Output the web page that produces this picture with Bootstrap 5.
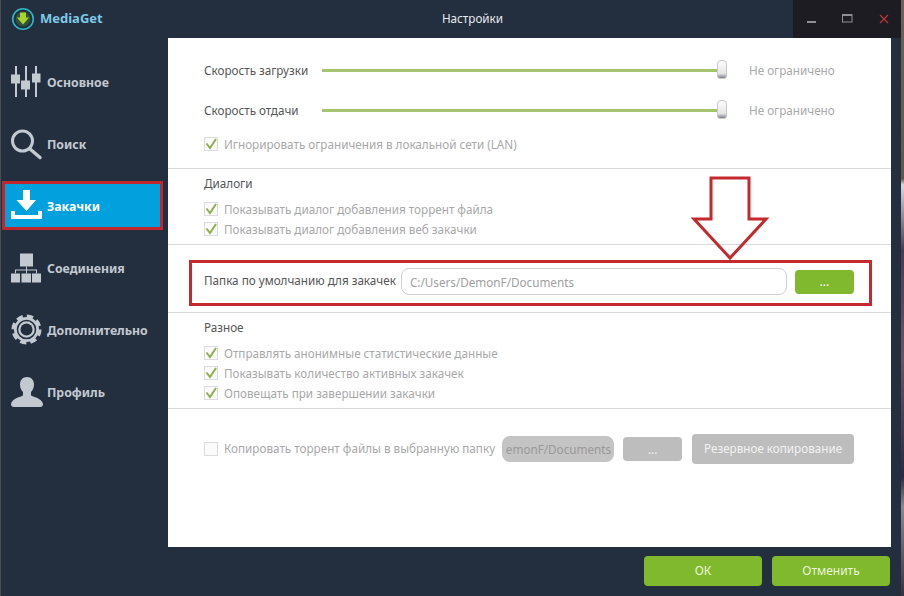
<!DOCTYPE html>
<html lang="ru"><head><meta charset="utf-8"><title>Настройки</title>
<link href="https://cdn.jsdelivr.net/npm/bootstrap@5.3.0/dist/css/bootstrap.min.css" rel="stylesheet">
<style>
html,body{height:100%;margin:0;overflow:hidden}
body{width:904px;height:596px;position:relative;font-family:"Noto Sans","Liberation Sans",sans-serif;font-size:11.7px;color:#555;background:linear-gradient(#6d6255 0,#5d5a4a 30%,#d8d8d8 31%,#4a3a55 42%,#6d5266 60%,#2a2a45 80%,#8a8a8a 85%,#3a3040 100%)}
.shell{width:901px;height:596px;border-left:1px solid #4a4f57;padding-left:1px;background:#232f3f}
.topbar{height:38px}
.brand{width:166px;padding-left:9px;color:#7fc9e6;font-weight:700;font-size:13px;gap:5px}
.wintitle{width:625px;padding-right:16px;color:#e8ebee;text-align:center}
.winctl{width:108px;background:#1c1c22;padding-left:14px;gap:26px;align-items:center}
.midrow{height:509px}
.side{width:166px;padding-top:19px;gap:13px}
.sideitem{height:49px;border:3px solid transparent;color:#c3c9d1;font-weight:700;font-size:12.3px;padding-left:6px;gap:4px;text-decoration:none;margin-right:5px;white-space:nowrap}
.sideitem svg{width:32px;height:32px;flex:none}
.sideitem span{padding-top:4px}
.sideitem.on{background:#02a0dc;border-color:#c0272d;color:#fff}
.panel{width:723px;background:#fff}
.sect{border-bottom:1px solid #d9d9d9;padding-left:36px;padding-right:37px}
.s1{height:131px;padding-top:22px}
.s2{height:76px;padding-top:4px}
.s3{height:68px;padding-top:23px}
.s4{height:96px;padding-top:4px}
.s5{padding-top:25px;border-bottom:0}
.rowline{height:20px;line-height:20px;white-space:nowrap}
.gap20{margin-top:20px}
.gap14{margin-top:14px}
.head6{margin-bottom:6px}
.lift{margin-bottom:2px}
.speed{width:118px}
.track{width:400px;height:3px;background:#a6c46d;position:relative}
.knob{position:absolute;right:-5px;top:-9px;width:10px;height:19px;border-radius:4px 4px 3px 3px;background:linear-gradient(#fff,#e4e4e4 75%,#77808a);border:1px solid #c8c8c8}
.val{margin-left:27px;color:#a8a8a8}
.muted{color:#a8a8a8}
.tick{width:14px;height:14px;border:1px solid #dcdcdc;background:#fbfbfb;margin-right:6px;flex:none}
.tick svg{display:block;width:14px;height:14px;margin:-1px}
.fold{height:27px;width:386px;border:1px solid #cfcfcf;border-radius:8px;font-size:11.7px;color:#a0a0a0;padding:0 8px;background:#fff;margin-left:5px;box-shadow:none;flex:none}
.gbtn{background:#80b82e;border:0;color:#fff;border-radius:4px;font-size:12px;padding:0}
.gray,.gray:disabled{background:#bdbdbd;color:#f2f2f2;opacity:1;border:0;padding:0;font-size:11.7px;border-radius:4px;white-space:nowrap}
.dots{width:59px;height:24px;margin-left:8px;line-height:20px;flex:none}
.dots.gray{margin-left:9px}
.slim,.slim:disabled{height:26px;width:112px;flex:none;border:0;border-radius:8px;background:#c4c4c4;color:#999;font-size:11.7px;margin-left:7px;overflow:hidden;text-align:right;padding:0 3px 0 0}
.backup{width:162px;height:30px;margin-left:10px;flex:none}
.foot{height:49px;gap:10px;padding-right:11px;padding-top:9px}
.fbtn{width:118px;height:30px;background:#80b82e;border:0;color:#eaf5d8;border-radius:4px;font-size:12px;padding:0}
.frame{height:30px}
.mark-box{position:absolute;left:189px;top:260px;width:683px;height:46px;border:3px solid #c5282f;pointer-events:none}
.mark-arrow{position:absolute;left:691px;top:175px;width:78px;height:86px;pointer-events:none}
</style></head>
<body>
<div class="shell d-flex flex-column">
 <div class="topbar d-flex">
  <div class="brand d-flex align-items-center">
   <svg width="24" height="24" viewBox="0 0 24 24"><circle cx="12" cy="12" r="10.3" fill="none" stroke="#2fb6c9" stroke-width="1.6"/><circle cx="12" cy="12" r="7.500" fill="#33503a"/><path d="M9 5.500h6v5h3.200L12 17.500 5.800 10.500H9z" fill="#a6d62c"/></svg>
   <span>MediaGet</span>
  </div>
  <div class="wintitle d-flex align-items-center justify-content-center">Настройки</div>
  <div class="winctl d-flex">
   <svg width="9" height="12" viewBox="0 0 9 12"><rect x="0" y="8" width="9" height="2" fill="#8d9197"/></svg>
   <svg width="11" height="10" viewBox="0 0 11 10"><rect x=".5" y=".5" width="9.500" height="7.500" fill="none" stroke="#8d9197"/><rect x="0" y="0" width="10" height="2" fill="#8d9197"/></svg>
   <svg width="10" height="10" viewBox="0 0 10 10"><path d="M1 1l8 8M9 1l-8 8" stroke="#c0393b" stroke-width="1.100"/></svg>
  </div>
 </div>
 <div class="midrow d-flex">
  <nav class="side d-flex flex-column">
   <a class="sideitem d-flex align-items-center" href="#"><svg viewBox="0 0 32 32" fill="#c3c9d1"><path d="M4 0h2v31H4zM14 0h2v31h-2zM24 0h2v31h-2z"/><rect x="0" y="8.500" width="9" height="9"/><rect x="10" y="14.500" width="9" height="9"/><rect x="21" y="7.500" width="8.500" height="9"/></svg><span>Основное</span></a>
   <a class="sideitem d-flex align-items-center" href="#"><svg viewBox="0 0 32 32" fill="none" stroke="#c3c9d1"><circle cx="11.500" cy="13" r="10" stroke-width="3"/><path d="M19 21l10 8.500" stroke-width="3.500" stroke-linecap="round"/></svg><span>Поиск</span></a>
   <a class="sideitem on d-flex align-items-center" href="#"><svg viewBox="0 0 32 32" fill="#fff"><path d="M12 0h7v10h6L15.500 21 5.500 10H12z"/><path d="M0 21h4v4h23v-4h4v8H0z"/></svg><span>Закачки</span></a>
   <a class="sideitem d-flex align-items-center" href="#"><svg viewBox="0 0 32 32" fill="#c3c9d1"><rect x="9" y="1.500" width="13" height="13"/><rect x="0" y="21.500" width="9" height="9"/><rect x="10.500" y="21.500" width="9.500" height="9"/><rect x="21" y="21.500" width="9" height="9"/><path d="M15 14.500h1v3h10v4h-1v-3H16v3h-1v-3H5v3H4v-4h11z"/></svg><span>Соединения</span></a>
   <a class="sideitem d-flex align-items-center" href="#"><svg viewBox="0 0 32 32"><circle cx="15.500" cy="15.500" r="12.500" fill="#c3c9d1"/><circle cx="15.500" cy="15.500" r="13" fill="none" stroke="#c3c9d1" stroke-width="4" stroke-dasharray="6.200 4"/><circle cx="15.500" cy="15.500" r="9" fill="none" stroke="#232f3f" stroke-width="1.500"/><circle cx="15.500" cy="15.500" r="6" fill="#232f3f"/></svg><span>Дополнительно</span></a>
   <a class="sideitem d-flex align-items-center" href="#"><svg viewBox="0 0 32 32" fill="#c3c9d1"><path d="M16 1c4.500 0 7 3.200 7 7.500 0 3-1.200 6-3 7.500v3.500c4 2 11 3 12 8.500 0 2-1 3-3 3H3c-2 0-3-1-3-3 1-5.500 8-6.500 12-8.500V16c-1.800-1.500-3-4.500-3-7.500C9 4.200 11.500 1 16 1z"/></svg><span>Профиль</span></a>
  </nav>
  <main class="panel d-flex flex-column">
   <section class="sect s1">
    <div class="rowline d-flex align-items-center"><span class="speed">Скорость загрузки</span><span class="track"><span class="knob"></span></span><span class="val">Не ограничено</span></div>
    <div class="rowline d-flex align-items-center gap20"><span class="speed">Скорость отдачи</span><span class="track"><span class="knob"></span></span><span class="val">Не ограничено</span></div>
    <div class="rowline d-flex align-items-center muted gap14"><span class="tick"><svg viewBox="0 0 14 14"><path d="M2.500 6.500l3.500 4.500 6-9" fill="none" stroke="#8fb04e" stroke-width="2"/></svg></span>Игнорировать ограничения в локальной сети (LAN)</div>
   </section>
   <section class="sect s2">
    <div class="rowline head6">Диалоги</div>
    <div class="rowline d-flex align-items-center muted"><span class="tick"><svg viewBox="0 0 14 14"><path d="M2.500 6.500l3.500 4.500 6-9" fill="none" stroke="#8fb04e" stroke-width="2"/></svg></span>Показывать диалог добавления торрент файла</div>
    <div class="rowline d-flex align-items-center muted"><span class="tick"><svg viewBox="0 0 14 14"><path d="M2.500 6.500l3.500 4.500 6-9" fill="none" stroke="#8fb04e" stroke-width="2"/></svg></span>Показывать диалог добавления веб закачки</div>
   </section>
   <section class="sect s3">
    <div class="d-flex align-items-center"><span class="text-nowrap lift">Папка по умолчанию для закачек</span><input class="form-control fold" value="C:/Users/DemonF/Documents" readonly><button class="btn gbtn dots" type="button">...</button></div>
   </section>
   <section class="sect s4">
    <div class="rowline head6">Разное</div>
    <div class="rowline d-flex align-items-center muted"><span class="tick"><svg viewBox="0 0 14 14"><path d="M2.500 6.500l3.500 4.500 6-9" fill="none" stroke="#8fb04e" stroke-width="2"/></svg></span>Отправлять анонимные статистические данные</div>
    <div class="rowline d-flex align-items-center muted"><span class="tick"><svg viewBox="0 0 14 14"><path d="M2.500 6.500l3.500 4.500 6-9" fill="none" stroke="#8fb04e" stroke-width="2"/></svg></span>Показывать количество активных закачек</div>
    <div class="rowline d-flex align-items-center muted"><span class="tick"><svg viewBox="0 0 14 14"><path d="M2.500 6.500l3.500 4.500 6-9" fill="none" stroke="#8fb04e" stroke-width="2"/></svg></span>Оповещать при завершении закачки</div>
   </section>
   <section class="sect s5">
    <div class="d-flex align-items-center frame"><span class="tick"></span><span class="muted text-nowrap">Копировать торрент файлы в выбранную папку</span><input class="form-control slim" value="emonF/Documents" disabled><button class="btn gray dots" type="button" disabled>...</button><button class="btn gray backup" type="button" disabled>Резервное копирование</button></div>
   </section>
  </main>
 </div>
 <div class="foot d-flex justify-content-end"><button class="btn fbtn" type="button">ОК</button><button class="btn fbtn" type="button">Отменить</button></div>
</div>
<div class="mark-box"></div>
<svg class="mark-arrow" viewBox="0 0 78 86"><path d="M20 3h38v41h17L39 83 3 44h17z" fill="none" stroke="#c5282f" stroke-width="3"/></svg>
</body></html>
